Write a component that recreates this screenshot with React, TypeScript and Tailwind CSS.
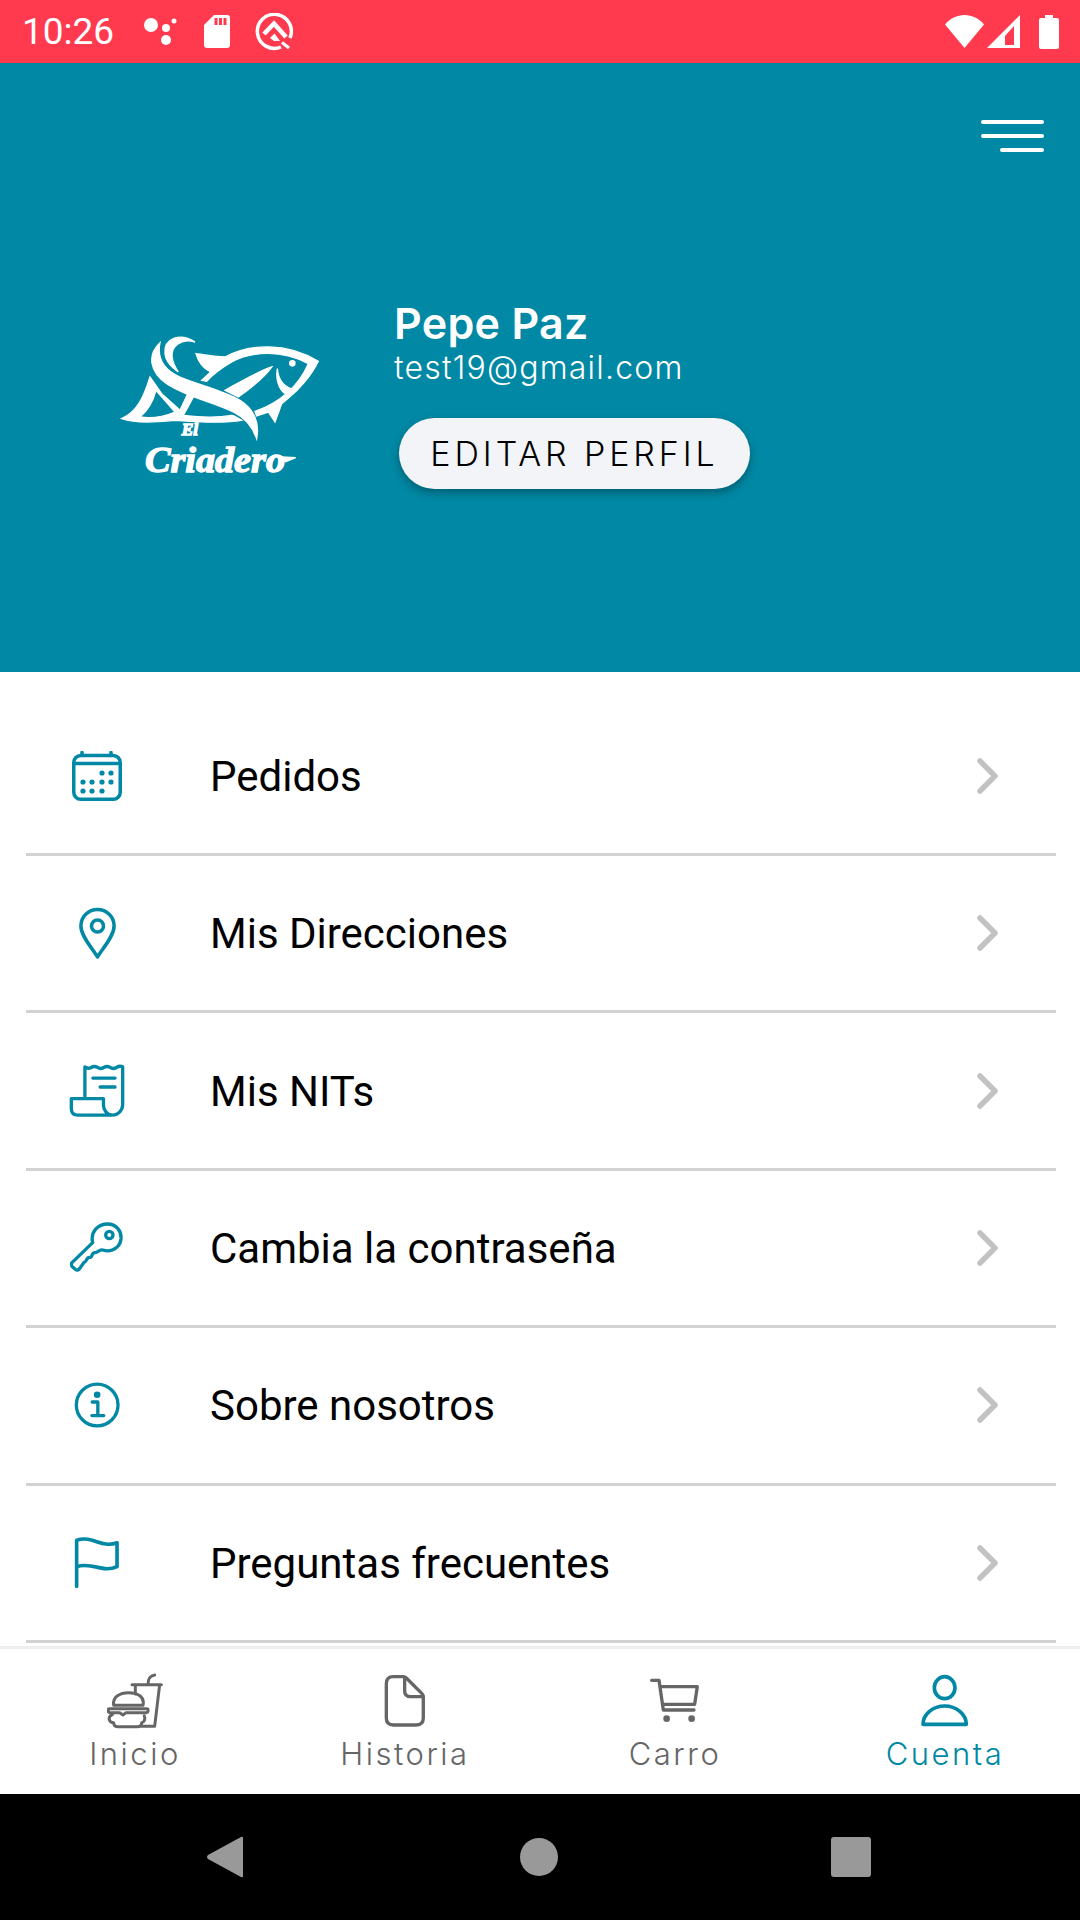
import { ReactNode } from "react";

const TEAL = "#0088a4";

function StatusIcons() {
  return (
    <div className="flex items-center">
      <svg className="ml-[28px]" width="38" height="36" viewBox="0 0 38 36" fill="#fff">
        <circle cx="9" cy="11" r="7" />
        <circle cx="24" cy="14" r="4" />
        <circle cx="24" cy="26" r="5" />
        <circle cx="32" cy="7" r="2.5" />
      </svg>
      <svg className="ml-[24px]" width="26" height="33" viewBox="0 0 26 33">
        <path d="M10 0h13a3 3 0 0 1 3 3v27a3 3 0 0 1-3 3H3a3 3 0 0 1-3-3V10z" fill="#fff" />
        <path d="M10.500 3h3v7h-3zM15 3h3v7h-3zM19.500 3h3v7h-3z" fill="#ff3a4e" />
      </svg>
      <svg className="ml-[25px]" width="38" height="38" viewBox="0 0 38 38" fill="none">
        <path d="M26 34A17 17 0 1 1 35 25" stroke="#fff" strokeWidth="3.500" />
        <path d="M9 21L19 10.500 31 24" stroke="#fff" strokeWidth="4.500" />
        <path d="M15 25l4.500-4.500L25 28h-6z" fill="#fff" />
        <path d="M27 29.500l7 5.500" stroke="#fff" strokeWidth="3" />
      </svg>
    </div>
  );
}

function SystemIcons() {
  return (
    <div className="flex items-center ml-auto mr-[21px]">
      <svg width="39" height="33" viewBox="0 0 39 33" fill="#fff">
        <path d="M19.500 33L0 9.500C5 3.500 12 0 19.500 0S34 3.500 39 9.500z" />
      </svg>
      <svg className="ml-[3px]" width="33" height="33" viewBox="0 0 33 33">
        <path d="M33 0v33H0z" fill="#fff" />
        <path d="M18 21L27 11v19h-9z" fill="#ff3a4e" />
      </svg>
      <svg className="ml-[19px]" width="20" height="34" viewBox="0 0 20 34" fill="#fff">
        <path d="M6 0h8v3h4a2 2 0 0 1 2 2v27a2 2 0 0 1-2 2H2a2 2 0 0 1-2-2V5a2 2 0 0 1 2-2h4z" />
      </svg>
    </div>
  );
}

function FishLogo() {
  return (
    <svg width="240" height="160" viewBox="0 0 720 480" fill="#fff" stroke="#fff" strokeWidth="4">
      <path d="M285 60C240 30 190 50 195 95c3 25 20 40 40 55-20-30-30-65 0-85 15-10 35-10 50-5z" />
      <path d="M180 62c-40 38-30 88 20 123 60 40 140 55 200 85 40 20 60 50 70 80 10-50-10-90-50-115-50-30-120-45-180-70-45-20-70-55-60-103z" />
      <path
        fillRule="evenodd"
        d="M150 165c-20 65-40 105-85 125 45 15 105 10 160 5 65 5 145 10 200 0-15-10-25-15-30-15-55 10-105 5-145 0l30-55-18-7-22 47-55-50-35-50zm18 40l57 65c-35 15-75 20-105 15 25-20 40-50 48-80z"
      />
      <path d="M288 95c32 5 62 10 87 10 75-40 185-45 280 13-25 52-65 92-110 127l-20 55-20-30-35 12-5-14c65-23 125-63 160-143-75-40-165-40-230-5-25 15-55 35-75 58l-15-3 27-25c-22-10-37-30-44-55z" />
      <path d="M515 135c-45 15-95 45-140 70l40 20c35-25 75-55 100-90z" />
      <path d="M532 140c-7 45 13 75 38 82l20-17c-30-5-55-25-58-65z" />
      <circle cx="577" cy="124" r="8" />
      <text x="245" y="340" fontFamily="'Liberation Serif', serif" fontStyle="italic" fontWeight="700" fontSize="52">
        El
      </text>
      <text x="135" y="450" fontFamily="'Liberation Serif', serif" fontStyle="italic" fontWeight="700" fontSize="110" textLength="420" lengthAdjust="spacingAndGlyphs">
        Criadero
      </text>
      <path d="M545 405l42 2-30 12z" />
    </svg>
  );
}

const iconStroke = { fill: "none", stroke: TEAL, strokeLinecap: "round", strokeLinejoin: "round" } as const;

function CalendarIcon() {
  const dots = [
    [30, 22], [39, 22],
    [11, 31], [20, 31], [30, 31], [39, 31],
    [11, 40], [20, 40], [30, 40],
  ];
  return (
    <svg width="50" height="50" viewBox="0 0 50 50">
      <g {...iconStroke} strokeWidth="3.500">
        <rect x="1.750" y="4.500" width="46.500" height="43.750" rx="7" />
        <path d="M1.750 12.500h46.500M10 1.500v3M39 1.500v3" />
      </g>
      {dots.map(([x, y]) => (
        <circle key={`${x}-${y}`} cx={x} cy={y} r="2.600" fill={TEAL} />
      ))}
    </svg>
  );
}

function PinIcon() {
  return (
    <svg width="37" height="52" viewBox="0 0 37 52" {...iconStroke} strokeWidth="3.500">
      <path d="M18.500 50C13 41 1.900 29 1.900 19a16.600 16.600 0 0 1 33.200 0C35.100 29 24 41 18.500 50z" />
      <circle cx="18.500" cy="19" r="6" />
    </svg>
  );
}

function ReceiptIcon() {
  return (
    <svg width="58" height="55" viewBox="85 1030 175 165" {...iconStroke} strokeWidth="10">
      <path d="M136 1135V1041q9 8 19 2t19 0 19 0 19 0 19 0 19-2V1155a32 32 0 0 1-32 32H115q-20 0-20-20V1137H192V1157a30 30 0 0 0 26 30" />
      <path d="M160 1075H227M182 1102H227" />
    </svg>
  );
}

function KeyIcon() {
  return (
    <svg width="55" height="55" viewBox="90 60 165 165" {...iconStroke} strokeWidth="10">
      <path d="M158 128C150 95 175 72 203 72c25 0 42 20 40 45-3 25-28 42-55 33-10-3-13 8-23 8-12 0-6 15-16 14s-9 14-17 15l-14 20q-6 6-12 1l-9-8q-6-6-1-12z" />
      <circle cx="208" cy="105" r="11" />
    </svg>
  );
}

function InfoIcon() {
  return (
    <svg width="48" height="50" viewBox="95 540 145 150" {...iconStroke} strokeWidth="10">
      <circle cx="168" cy="615" r="63" />
      <path d="M153 606h17v41M152 647h36" />
      <circle cx="168" cy="584" r="5" fill={TEAL} />
    </svg>
  );
}

function FlagIcon() {
  return (
    <svg width="48" height="55" viewBox="100 1005 145 165" {...iconStroke} strokeWidth="11">
      <path d="M111 1160V1020C160 1005 185 1045 233 1028V1100C190 1120 160 1085 111 1100" />
    </svg>
  );
}

function MenuRow({ icon, label }: { icon: ReactNode; label: string }) {
  return (
    <div className="flex items-center h-[157.4px] ml-[26px] mr-[24px] border-b-[3px] border-[#d2d2d2]">
      <div className="flex justify-center items-center w-[142px]">{icon}</div>
      <span className="ml-[42px] pt-[1px] text-[42px] text-black font-[Roboto]">{label}</span>
      <svg className="ml-auto mr-[58px]" width="24" height="40" viewBox="0 0 24 40" fill="none" stroke="#c2c2c2" strokeWidth="5.500" strokeLinecap="round" strokeLinejoin="round">
        <path d="M6 5l15 15L6 35" />
      </svg>
    </div>
  );
}

function BurgerIcon() {
  return (
    <svg width="56.670" height="56.670" viewBox="50 25 170 170" fill="none" stroke="#666" strokeWidth="9" strokeLinecap="round" strokeLinejoin="round">
      <path d="M125 60h88M135 60l0 28M208 60l-15 125h-40M173 60c0-14 2-26 20-29" />
      <path d="M70 122c-4-26 20-38 44-38 28 0 50 12 44 38zM58 132c-6 0-6 10 0 12h30l10 7 9-7h62c6-2 6-12 0-12zM66 150c-16 8-10 24 4 24 0 8 6 12 14 12h56c8 0 14-4 14-12 6 0 12-10 8-20" />
    </svg>
  );
}

function FileIcon() {
  return (
    <svg width="45.300" height="56.670" viewBox="880 25 136 170" fill="none" stroke="#666" strokeWidth="10" strokeLinecap="round" strokeLinejoin="round">
      <path d="M914 36h30q5 0 9 4l47 47q4 4 4 9v64q0 21-21 21h-69q-21 0-21-21V57q0-21 21-21z" />
      <path d="M948 38v40q0 18 18 18h38" />
    </svg>
  );
}

function CartIcon() {
  return (
    <svg width="53.300" height="56.670" viewBox="25 25 160 170" fill="none" stroke="#666" strokeWidth="10" strokeLinecap="round" strokeLinejoin="round">
      <path d="M36 47h22l13 89h92M61 66h112l-8 53H68" />
      <circle cx="81" cy="162" r="10" fill="#666" stroke="none" />
      <circle cx="156" cy="162" r="10" fill="#666" stroke="none" />
    </svg>
  );
}

function UserIcon() {
  return (
    <svg width="47.300" height="56.670" viewBox="850 25 142 170" fill="none" stroke={TEAL} strokeWidth="11" strokeLinecap="round" strokeLinejoin="round">
      <ellipse cx="921" cy="69" rx="31" ry="33" />
      <path d="M856 179c0-30 30-55 65-55s65 25 65 55z" />
    </svg>
  );
}

function TabItem({ icon, label, active }: { icon: ReactNode; label: string; active?: boolean }) {
  return (
    <div className="flex flex-col items-center">
      <div className="flex items-center justify-center h-[57px]">{icon}</div>
      <span className={`mt-[6px] text-[31px] leading-[36px] tracking-[2.500px] font-light font-[Inter] ${active ? "text-[#0088a4]" : "text-[#666666]"}`}>
        {label}
      </span>
    </div>
  );
}

export default function App() {
  return (
    <div className="flex flex-col w-[1080px] h-[1920px] overflow-hidden bg-white">
      {/* Status bar */}
      <div className="flex items-center h-[63px] shrink-0 bg-[#ff3a4e] pl-[22px]">
        <span className="w-[92px] text-[37px] text-white font-[Roboto]">10:26</span>
        <StatusIcons />
        <SystemIcons />
      </div>

      {/* Header */}
      <div className="h-[609px] shrink-0 bg-[#0088a4]">
        <div className="flex flex-col items-end gap-[10px] pt-[57px] pr-[36px]">
          <div className="w-[63px] h-[4px] rounded-full bg-white" />
          <div className="w-[63px] h-[4px] rounded-full bg-white" />
          <div className="w-[44px] h-[4px] rounded-full bg-white" />
        </div>
        <div className="flex items-start pl-[100px] mt-[173px]">
          <div className="mt-[-3px]">
            <FishLogo />
          </div>
          <div className="flex flex-col items-start ml-[54px] mt-[-28px]">
            <span className="text-[43px] leading-[52px] tracking-[0.300px] font-semibold text-white font-[Inter]">Pepe Paz</span>
            <span className="text-[32px] leading-[38px] tracking-[1.200px] font-light text-white font-[Inter]">test19@gmail.com</span>
            <button className="flex items-center justify-center w-[351px] h-[71px] mt-[31px] ml-[5px] rounded-full bg-[#f2f4f8] shadow-[0_4px_8px_rgba(0,0,0,0.3)] text-[34px] tracking-[3.900px] font-light text-black font-[Inter]">
              EDITAR PERFIL
            </button>
          </div>
        </div>
      </div>

      {/* Menu list */}
      <div className="flex-1 min-h-0 overflow-hidden pt-[26.600px]">
        <MenuRow icon={<CalendarIcon />} label="Pedidos" />
        <MenuRow icon={<PinIcon />} label="Mis Direcciones" />
        <MenuRow icon={<ReceiptIcon />} label="Mis NITs" />
        <MenuRow icon={<KeyIcon />} label="Cambia la contraseña" />
        <MenuRow icon={<InfoIcon />} label="Sobre nosotros" />
        <MenuRow icon={<FlagIcon />} label="Preguntas frecuentes" />
      </div>

      {/* Bottom tabs */}
      <div className="grid grid-cols-4 h-[148px] shrink-0 pt-[24px] bg-white border-t-[3px] border-[#eeeeee]">
        <TabItem icon={<BurgerIcon />} label="Inicio" />
        <TabItem icon={<FileIcon />} label="Historia" />
        <TabItem icon={<CartIcon />} label="Carro" />
        <TabItem icon={<UserIcon />} label="Cuenta" active />
      </div>

      {/* Android nav bar */}
      <div className="flex items-center h-[126px] shrink-0 bg-black pl-[207px]">
        <svg width="36" height="42" viewBox="0 0 36 42" fill="#999">
          <path d="M36 2v38q0 2-2 1L1 23q-2-2 0-4L34 1q2-1 2 1z" />
        </svg>
        <div className="w-[38px] h-[38px] ml-[277px] rounded-full bg-[#999999]" />
        <div className="w-[40px] h-[40px] ml-[273px] rounded-[3px] bg-[#999999]" />
      </div>
    </div>
  );
}
